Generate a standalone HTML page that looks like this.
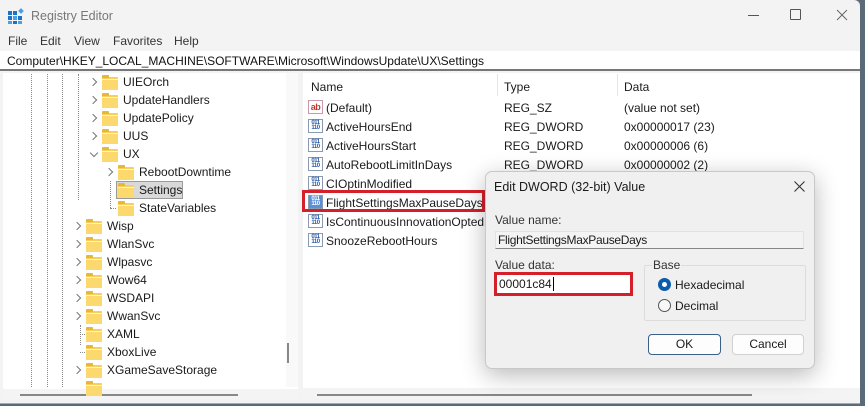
<!DOCTYPE html>
<html><head><meta charset="utf-8"><style>
*{margin:0;padding:0;box-sizing:border-box}
body{width:865px;height:406px;overflow:hidden;background:#5a6a78;font-family:"Liberation Sans",sans-serif;font-size:12px;color:#1a1a1a;position:relative}
.a{position:absolute;white-space:nowrap}
.win{position:absolute;left:0;top:0;width:861px;height:404px;background:#f3f3f3;border-right:1px solid #aaa;border-bottom:1px solid #aaa;border-top-right-radius:7px}
.fold{position:absolute;width:16px;height:12px;background:#f8cf5b;border-radius:1px}
.fold:before{content:"";position:absolute;left:0;top:-2px;width:7px;height:3px;background:#e8b638;border-radius:1px 1px 0 0}
.fold:after{content:"";position:absolute;left:0;top:2px;width:16px;height:10px;background:#fbd96e;border-top:1px solid #fff5c8}
.chev{position:absolute;width:6px;height:6px;border-right:1.3px solid #777;border-bottom:1.3px solid #777;transform:rotate(-45deg)}
.chd{transform:rotate(45deg)}
.dl{position:absolute;border-left:1px dotted #888}
.dh{position:absolute;border-top:1px dotted #888}
.ico{position:absolute;width:15px;height:14px;border:1px solid #8a9ab0;background:#fff;font-size:6px;line-height:5px;color:#2a5aa8;font-weight:bold;text-align:center;letter-spacing:-0.5px;padding-top:1px}
</style></head><body>
<div class="win">
<!-- title -->
<svg class="a" style="left:8px;top:8px" width="16" height="16"><rect x="0" y="3" width="4" height="4" fill="#1a73c8"/><rect x="5" y="3" width="4" height="4" fill="#1a73c8"/><rect x="0" y="8" width="4" height="4" fill="#1a73c8"/><rect x="5" y="8" width="4" height="4" fill="#4aa0e0"/><rect x="10" y="8" width="4" height="4" fill="#1a73c8"/><rect x="0" y="13" width="4" height="3" fill="#4aa0e0"/><rect x="5" y="13" width="4" height="3" fill="#1a73c8"/><rect x="10" y="13" width="4" height="3" fill="#4aa0e0"/><rect x="11" y="1" width="4" height="4" fill="#4aa0e0" transform="rotate(45 13 3)"/></svg>
<div class="a" style="left:31px;top:9px;color:#777;font-size:12.5px">Registry Editor</div>
<div class="a" style="left:748px;top:15px;width:11px;border-top:1px solid #555"></div>
<div class="a" style="left:790px;top:9px;width:11px;height:11px;border:1px solid #555;border-radius:1px"></div>
<svg class="a" style="left:836px;top:9px" width="12" height="12"><path d="M1 1L11 11M11 1L1 11" stroke="#666" stroke-width="1"/></svg>
<!-- menu -->
<div class="a" style="left:8px;top:34px;color:#333">File</div>
<div class="a" style="left:40px;top:34px;color:#333">Edit</div>
<div class="a" style="left:74px;top:34px;color:#333">View</div>
<div class="a" style="left:113px;top:34px;color:#333">Favorites</div>
<div class="a" style="left:174px;top:34px;color:#333">Help</div>
<!-- address -->
<div class="a" style="left:0;top:51px;width:860px;height:20px;background:#fff;border-bottom:2px solid #777"></div>
<div class="a" style="left:7px;top:54px;color:#111">Computer\HKEY_LOCAL_MACHINE\SOFTWARE\Microsoft\WindowsUpdate\UX\Settings</div>
<!-- tree pane -->
<div class="a" style="left:3px;top:73px;width:295px;height:326px;background:#fff"></div>
<div class="a" style="left:286px;top:73px;width:12px;height:314px;background:#f9f9f9"></div>
<div class="a" style="left:287px;top:343px;width:2px;height:20px;background:#888"></div>
<div class="a" style="left:3px;top:389px;width:295px;height:10px;background:#f4f4f4"></div>
<div class="a" style="left:20px;top:394px;width:218px;border-top:2px solid #888"></div>
<div class="dl" style="left:31px;top:74px;height:313px"></div>
<div class="dl" style="left:47px;top:74px;height:313px"></div>
<div class="dl" style="left:62px;top:74px;height:313px"></div>
<div class="dl" style="left:78px;top:74px;height:126px"></div>
<div class="dl" style="left:110px;top:181px;height:27px"></div>
<div class="dh" style="left:110px;top:208px;width:6px"></div>
<div class="dl" style="left:80px;top:325px;height:20px"></div>
<div class="dh" style="left:80px;top:334px;width:5px"></div><div class="dh" style="left:80px;top:352px;width:5px"></div>

<div class="chev" style="left:90px;top:79px"></div><div class="fold" style="left:102px;top:77px"></div><div class="a" style="left:123px;top:75px">UIEOrch</div>
<div class="chev" style="left:90px;top:97px"></div><div class="fold" style="left:102px;top:95px"></div><div class="a" style="left:123px;top:93px">UpdateHandlers</div>
<div class="chev" style="left:90px;top:115px"></div><div class="fold" style="left:102px;top:113px"></div><div class="a" style="left:123px;top:111px">UpdatePolicy</div>
<div class="chev" style="left:90px;top:133px"></div><div class="fold" style="left:102px;top:131px"></div><div class="a" style="left:123px;top:129px">UUS</div>
<div class="chev chd" style="left:91px;top:150px"></div><div class="fold" style="left:102px;top:149px"></div><div class="a" style="left:123px;top:147px">UX</div>
<div class="chev" style="left:106px;top:169px"></div><div class="fold" style="left:118px;top:167px"></div><div class="a" style="left:139px;top:165px">RebootDowntime</div>
<div class="a" style="left:116px;top:181px;width:67px;height:18px;background:#d9d9d9;border:1px solid #9a9a9a"></div>
<div class="fold" style="left:118px;top:185px"></div><div class="a" style="left:139px;top:183px">Settings</div>
<div class="fold" style="left:118px;top:203px"></div><div class="a" style="left:139px;top:201px">StateVariables</div>
<div class="chev" style="left:74px;top:223px"></div><div class="fold" style="left:86px;top:221px"></div><div class="a" style="left:107px;top:219px">Wisp</div>
<div class="chev" style="left:74px;top:241px"></div><div class="fold" style="left:86px;top:239px"></div><div class="a" style="left:107px;top:237px">WlanSvc</div>
<div class="chev" style="left:74px;top:259px"></div><div class="fold" style="left:86px;top:257px"></div><div class="a" style="left:107px;top:255px">Wlpasvc</div>
<div class="chev" style="left:74px;top:277px"></div><div class="fold" style="left:86px;top:275px"></div><div class="a" style="left:107px;top:273px">Wow64</div>
<div class="chev" style="left:74px;top:295px"></div><div class="fold" style="left:86px;top:293px"></div><div class="a" style="left:107px;top:291px">WSDAPI</div>
<div class="chev" style="left:74px;top:313px"></div><div class="fold" style="left:86px;top:311px"></div><div class="a" style="left:107px;top:309px">WwanSvc</div>
<div class="fold" style="left:86px;top:329px"></div><div class="a" style="left:107px;top:327px">XAML</div>
<div class="fold" style="left:86px;top:347px"></div><div class="a" style="left:107px;top:345px">XboxLive</div>
<div class="chev" style="left:74px;top:367px"></div><div class="fold" style="left:86px;top:365px"></div><div class="a" style="left:107px;top:363px">XGameSaveStorage</div>
<div class="fold" style="left:86px;top:383px;height:5px"></div>
<!-- list pane -->
<div class="a" style="left:303px;top:73px;width:557px;height:326px;background:#fff"></div>
<div class="a" style="left:303px;top:388px;width:557px;height:11px;background:#f4f4f4"></div>
<div class="a" style="left:317px;top:394px;width:435px;border-top:2px solid #888"></div>
<div class="a" style="left:311px;top:80px">Name</div>
<div class="a" style="left:497px;top:74px;height:22px;border-left:1px solid #e5e5e5"></div>
<div class="a" style="left:504px;top:80px">Type</div>
<div class="a" style="left:617px;top:74px;height:22px;border-left:1px solid #e5e5e5"></div>
<div class="a" style="left:624px;top:80px">Data</div>

<div class="ico" style="left:308px;top:100px;color:#c0392b;font-size:9px;line-height:11px;border-color:#c9a">ab</div><div class="a" style="left:326px;top:101px">(Default)</div><div class="a" style="left:504px;top:101px">REG_SZ</div><div class="a" style="left:624px;top:101px">(value not set)</div>
<div class="ico" style="left:308px;top:119px">011<br>110</div><div class="a" style="left:326px;top:120px">ActiveHoursEnd</div><div class="a" style="left:504px;top:120px">REG_DWORD</div><div class="a" style="left:624px;top:120px">0x00000017 (23)</div>
<div class="ico" style="left:308px;top:138px">011<br>110</div><div class="a" style="left:326px;top:139px">ActiveHoursStart</div><div class="a" style="left:504px;top:139px">REG_DWORD</div><div class="a" style="left:624px;top:139px">0x00000006 (6)</div>
<div class="ico" style="left:308px;top:157px">011<br>110</div><div class="a" style="left:326px;top:158px">AutoRebootLimitInDays</div><div class="a" style="left:504px;top:158px">REG_DWORD</div><div class="a" style="left:624px;top:158px">0x00000002 (2)</div>
<div class="ico" style="left:308px;top:176px">011<br>110</div><div class="a" style="left:326px;top:177px">CIOptinModified</div>
<div class="ico" style="left:308px;top:195px;background:#5b8fd6;color:#fff">011<br>110</div><div class="a" style="left:326px;top:196px">FlightSettingsMaxPauseDays</div>
<div class="a" style="left:302px;top:190px;width:183px;height:22px;border:3px solid #d4202a"></div>
<div class="ico" style="left:308px;top:214px">011<br>110</div><div class="a" style="left:326px;top:215px">IsContinuousInnovationOpted</div>
<div class="ico" style="left:308px;top:233px">011<br>110</div><div class="a" style="left:326px;top:234px">SnoozeRebootHours</div>
<div class="a" style="left:860px;top:0;width:5px;height:406px;background:#5a6a78"></div>
</div>
<!-- dialog -->
<div class="a" style="left:485px;top:171px;width:330px;height:198px;background:#f0f0f0;border:1px solid #c8c8c8;border-radius:7px;box-shadow:0 6px 24px rgba(0,0,0,0.28)">
<div class="a" style="left:8px;top:8px;font-size:12.5px">Edit DWORD (32-bit) Value</div>
<svg class="a" style="left:308px;top:9px" width="11" height="11"><path d="M0.5 0.5L10.5 10.5M10.5 0.5L0.5 10.5" stroke="#333" stroke-width="1.1"/></svg>
<div class="a" style="left:9px;top:41px;color:#333">Value name:</div>
<div class="a" style="left:9px;top:59px;width:309px;height:18px;background:#f3f3f3;border:1px solid #e2e2e2;border-bottom:1px solid #888"></div>
<div class="a" style="left:12px;top:61px;letter-spacing:-0.3px">FlightSettingsMaxPauseDays</div>
<div class="a" style="left:9px;top:86px;color:#333">Value data:</div>
<div class="a" style="left:8px;top:100px;width:139px;height:24px;background:#fff;border:3px solid #d4202a"></div>
<div class="a" style="left:13px;top:105px">00001c84<span style="border-left:1px solid #000;margin-left:1px"></span></div>
<div class="a" style="left:158px;top:93px;width:162px;height:56px;border:1px solid #dcdcdc;border-radius:2px"></div>
<div class="a" style="left:166px;top:86px;background:#f0f0f0;padding:0 1px;color:#333">Base</div>
<div class="a" style="left:172px;top:106px;width:13px;height:13px;border-radius:50%;background:#0b5cab"><div style="position:absolute;left:4px;top:4px;width:5px;height:5px;border-radius:50%;background:#fff"></div></div>
<div class="a" style="left:189px;top:106px">Hexadecimal</div>
<div class="a" style="left:172px;top:127px;width:13px;height:13px;border-radius:50%;border:1px solid #555;background:#f8f8f8"></div>
<div class="a" style="left:189px;top:127px">Decimal</div>
<div class="a" style="left:162px;top:162px;width:73px;height:21px;background:#fdfdfd;border:1px solid #3b5f88;border-radius:4px;text-align:center;line-height:19px">OK</div>
<div class="a" style="left:246px;top:162px;width:72px;height:21px;background:#fdfdfd;border:1px solid #d0d0d0;border-radius:4px;text-align:center;line-height:19px">Cancel</div>
</div>
</body></html>
